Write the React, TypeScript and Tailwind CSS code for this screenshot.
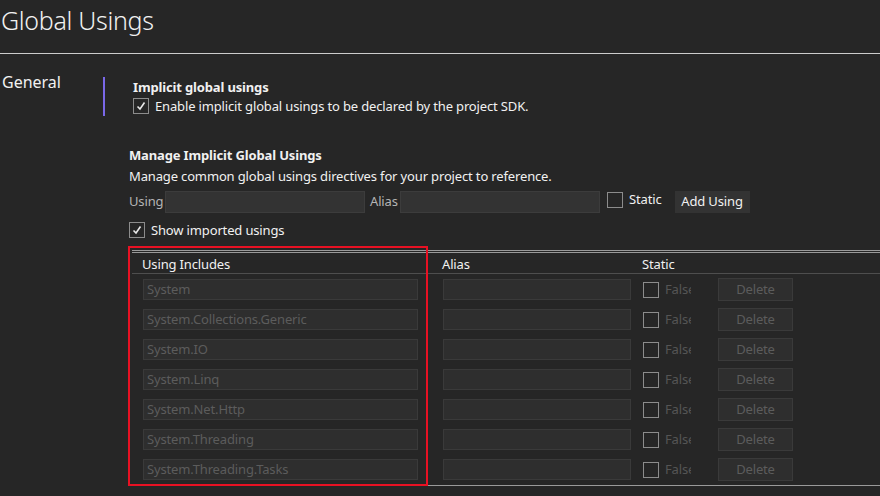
import React from "react";

const rows = [
  "System",
  "System.Collections.Generic",
  "System.IO",
  "System.Linq",
  "System.Net.Http",
  "System.Threading",
  "System.Threading.Tasks",
];

function Check({ checked, className = "" }: { checked?: boolean; className?: string }) {
  return (
    <div
      className={`w-[16px] h-[16px] border border-[#8c8c8c] flex items-center justify-center shrink-0 ${className}`}
    >
      {checked && (
        <svg width="12" height="12" viewBox="0 0 12 12">
          <path d="M2.5 6.5 L5 9 L9.5 2.5" stroke="#e8e8e8" strokeWidth="1.6" fill="none" />
        </svg>
      )}
    </div>
  );
}

export default function App() {
  return (
    <div
      className="w-[880px] h-[496px] bg-[#262626] overflow-hidden text-[#f1f1f1] relative"
      style={{ fontFamily: '"Noto Sans", "Open Sans", sans-serif' }}
    >
      <div className="h-[53px] pl-[1px] pt-[4px] text-[25px] font-light leading-[32px] tracking-[-0.3px]">
        Global Usings
      </div>
      <div className="h-px bg-[#cccccc]" />
      <div className="flex">
        <div className="w-[103px] shrink-0 pl-[2px] pt-[18px] text-[16px] leading-[20px]">General</div>
        <div className="flex flex-col shrink-0">
          <div className="flex mt-[23px]">
            <div className="w-[2px] h-[39px] bg-[#7a68e8]" />
          </div>
        </div>
        <div className="flex flex-col pl-[24px] shrink-0 tracking-[-0.15px]">
          <div className="pl-[4px] pt-[24px] text-[13px] font-bold leading-[18px]">Implicit global usings</div>
          <div className="pl-[4px] flex items-center mt-[1px] gap-[6px] text-[13px] leading-[18px]">
            <Check checked />
            <span>Enable implicit global usings to be declared by the project SDK.</span>
          </div>
          <div className="mt-[31px] text-[13px] font-bold leading-[18px]">Manage Implicit Global Usings</div>
          <div className="mt-[3px] text-[13px] leading-[18px]">Manage common global usings directives for your project to reference.</div>
          <div className="mt-[6px] flex items-center h-[22px] text-[13px]">
            <span className="text-[#b4b4b4] w-[36px] shrink-0">Using</span>
            <div className="w-[200px] shrink-0 h-[22px] bg-[#333333] border border-[#3c3c3c]" />
            <span className="text-[#b4b4b4] ml-[5px] w-[30px] shrink-0">Alias</span>
            <div className="w-[200px] shrink-0 h-[22px] bg-[#333333] border border-[#3c3c3c]" />
            <Check className="ml-[7px] mt-[-4px]" />
            <span className="ml-[6px] mt-[-4px]">Static</span>
            <div className="ml-[13px] w-[75px] shrink-0 h-[22px] bg-[#333333] flex items-center justify-center">Add Using</div>
          </div>
          <div className="mt-[8px] flex items-center gap-[6px] text-[13px] leading-[18px]">
            <Check checked />
            <span>Show imported usings</span>
          </div>
          <div className="mt-[11px] ml-[3px] w-[760px]">
            <div className="h-[3px] border-t border-b border-[#9a9a9a]" />
            <div className="flex h-[21px] items-center text-[13px] border-b border-[#4e4e4e]">
              <span className="w-[300px] shrink-0 pl-[10px] pt-[3px]">Using Includes</span>
              <span className="w-[200px] shrink-0 pl-[10px] pt-[3px]">Alias</span>
              <span className="w-[100px] shrink-0 pl-[10px] pt-[3px]">Static</span>
            </div>
            <div className="flex flex-col pt-[5px] gap-[9px]">
              {rows.map((r) => (
                <div key={r} className="flex items-center h-[21px] text-[13px]">
                  <div className="w-[275px] shrink-0 ml-[11px] h-[21px] bg-[#2e2e2e] border border-[#3a3a3a] text-[#5c5c5c] pl-[3px] leading-[19px]">
                    {r}
                  </div>
                  <div className="w-[188px] shrink-0 ml-[25px] h-[21px] bg-[#2e2e2e] border border-[#3a3a3a]" />
                  <Check className="ml-[12px] border-[#6a6a6a]" />
                  <span className="ml-[6px] w-[26px] shrink-0 overflow-hidden whitespace-nowrap text-[#555555]">False</span>
                  <div className="ml-[27px] w-[75px] shrink-0 h-[23px] bg-[#2e2e2e] border border-[#3a3a3a] text-[#5c5c5c] flex items-center justify-center">
                    Delete
                  </div>
                </div>
              ))}
            </div>
          </div>
          <div className="mt-[5px] h-px w-[760px] bg-[#9a9a9a]" />
        </div>
      </div>
      <div className="absolute left-[128px] top-[246px] w-[300px] h-[240px] border-2 border-[#e81123]" />
    </div>
  );
}
